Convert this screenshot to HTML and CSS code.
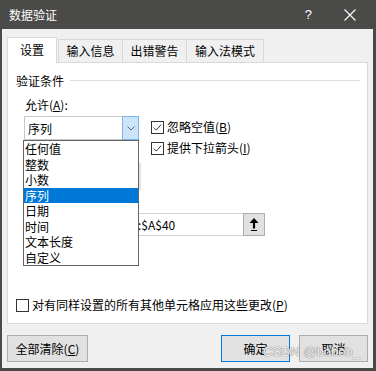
FILE: index.html
```html
<!DOCTYPE html>
<html>
<head>
  <title>数据验证</title>
  <link rel="stylesheet" href="styles.css">
</head>
<body>
  <div class="window">
    <div class="titlebar">
      <span class="title">数据验证</span>
      <span class="help">?</span>
      <svg class="close" width="12" height="12" viewBox="0 0 12 12">
        <path d="M0.5 0.5 L11.5 11.5 M11.5 0.5 L0.5 11.5" stroke="#fff" stroke-width="1.1" fill="none"/>
      </svg>
    </div>

    <div class="client">
      <div class="tabs">
        <div class="tab active">设置</div>
        <div class="tab tab-info">输入信息</div>
        <div class="tab tab-error">出错警告</div>
        <div class="tab tab-ime">输入法模式</div>
      </div>

      <div class="panel">
        <div class="legend"><span>验证条件</span><span class="rule"></span></div>

        <div class="cond">
          <div class="label">允许(<u>A</u>):</div>
          <div class="allow-row">
            <div class="combo">
              <span class="combo-text">序列</span>
              <span class="combo-btn">
                <svg width="8" height="5" viewBox="0 0 8 5"><path d="M0.5 0.5 L4 4 L7.5 0.5" stroke="#666" fill="none"/></svg>
              </span>
            </div>
            <div class="checks">
              <div class="check">
                <svg width="13" height="13" viewBox="0 0 13 13"><rect x="0.5" y="0.5" width="12" height="12" fill="#fff" stroke="#333"/><path d="M2.8 6.6 L5.3 9.1 L10.2 3.6" stroke="#333" fill="none"/></svg>
                <span>忽略空值(<u>B</u>)</span>
              </div>
              <div class="check">
                <svg width="13" height="13" viewBox="0 0 13 13"><rect x="0.5" y="0.5" width="12" height="12" fill="#fff" stroke="#333"/><path d="M2.8 6.6 L5.3 9.1 L10.2 3.6" stroke="#333" fill="none"/></svg>
                <span>提供下拉箭头(<u>I</u>)</span>
              </div>
            </div>
          </div>
          <div class="data-box"></div>
          <!-- source label sits under the open drop list -->
          <div class="src-label"></div>
          <div class="src-row">
            <div class="src-input">=$A$1:$A$40</div>
            <div class="src-btn">
              <svg width="12" height="15" viewBox="0 0 12 15"><path d="M6 1 L1.5 6 L4.9 6 L4.9 11.5 L7.1 11.5 L7.1 6 L10.5 6 Z" fill="#000"/><rect x="3" y="13" width="6" height="1" fill="#000"/></svg>
            </div>
          </div>
        </div>

        <div class="check apply">
          <svg width="13" height="13" viewBox="0 0 13 13"><rect x="0.5" y="0.5" width="12" height="12" fill="#fff" stroke="#333"/></svg>
          <span>对有同样设置的所有其他单元格应用这些更改(<u>P</u>)</span>
        </div>

        <ul class="droplist">
          <li>任何值</li>
          <li>整数</li>
          <li>小数</li>
          <li class="sel">序列</li>
          <li>日期</li>
          <li>时间</li>
          <li>文本长度</li>
          <li>自定义</li>
        </ul>
      </div>

      <div class="buttons">
        <button class="btn-clear">全部清除(<u>C</u>)</button>
        <button class="btn-ok">确定</button>
        <button class="btn-cancel">取消</button>
      </div>
    </div>

    <div class="watermark">CSDN @bobob_</div>
  </div>
</body>
</html>
```

FILE: styles.css
```css
html, body {
  margin: 0;
  padding: 0;
  font-family: "Noto Sans CJK SC", "Noto Sans", sans-serif;
  font-size: 12px;
  color: #000;
}
.window {
  position: relative;
  height: 371px;
  display: flex;
  flex-direction: column;
  background-color: #4a4a48;
}
.titlebar {
  height: 29px;
  flex-shrink: 0;
  display: flex;
  align-items: center;
  padding-left: 9px;
  color: #fff;
}
.title {
  font-size: 12px;
  line-height: 16px;
}
.help {
  margin-left: auto;
  font-family: "Liberation Sans", sans-serif;
  font-size: 13px;
}
.close {
  margin-left: 32px;
  margin-right: 20px;
}
.client {
  flex: 1;
  margin: 0 3px 3px 2px;
  padding: 8px 5px 0 5px;
  background-color: #f0f0f0;
  display: flex;
  flex-direction: column;
}
.tabs {
  display: flex;
  height: 25px;
  position: relative;
  z-index: 1;
}
.tab {
  box-sizing: border-box;
  margin-top: 2px;
  height: 23px;
  line-height: 21px;
  border: 1px solid #d9d9d9;
  border-bottom: none;
  background-color: #f0f0f0;
  text-align: center;
}
.tab.active {
  margin-top: 0;
  height: 26px;
  line-height: 24px;
  width: 50px;
  background-color: #fff;
}
.tab-info {
  width: 65px;
  margin-left: 1px;
}
.tab-error {
  width: 64px;
  border-left: none;
}
.tab-ime {
  width: 77px;
  border-left: none;
}
.panel {
  box-sizing: border-box;
  position: relative;
  height: 262px;
  background-color: #fff;
  border: 1px solid #d9d9d9;
  display: flex;
  flex-direction: column;
}
.legend {
  display: flex;
  align-items: center;
  height: 16px;
  line-height: 16px;
  margin: 10px 7px 0 8px;
}
.legend .rule {
  flex: 1;
  margin-left: 6px;
  margin-top: -1px;
  border-top: 1px solid #dcdcdc;
}
.cond {
  padding-left: 16px;
}
.label {
  line-height: 16px;
  margin: 8px 0 0 1px;
}
.allow-row {
  display: flex;
  margin-top: 3px;
}
.combo {
  box-sizing: border-box;
  width: 115px;
  height: 24px;
  border: 1px solid #c8c8c8;
  display: flex;
  align-items: center;
}
.combo-text {
  padding-left: 3px;
}
.combo-btn {
  box-sizing: border-box;
  margin: -1px -1px -1px auto;
  width: 17px;
  height: 24px;
  background-color: #cce4f7;
  border: 1px solid #7eb4ea;
  display: flex;
  align-items: center;
  justify-content: center;
}
.checks {
  margin-left: 12px;
  padding-top: 3px;
  display: flex;
  flex-direction: column;
  gap: 5px;
}
.check {
  display: flex;
  align-items: center;
  gap: 3px;
  height: 16px;
  line-height: 16px;
  white-space: nowrap;
}
.data-box {
  margin-top: 7px;
  width: 117px;
  height: 27px;
  background-color: #e3e3e3;
}
.src-label {
  margin-top: 5px;
  height: 16px;
}
.src-row {
  display: flex;
  margin-top: 2px;
  height: 23px;
}
.src-input {
  box-sizing: border-box;
  width: 219px;
  height: 23px;
  line-height: 21px;
  border: 1px solid #d4d4d4;
  border-right: none;
  padding-left: 79px;
}
.src-btn {
  box-sizing: border-box;
  width: 22px;
  height: 23px;
  background-color: #e1e1e1;
  border: 1px solid #adadad;
  display: flex;
  align-items: center;
  justify-content: center;
}
.apply {
  margin: auto 0 10px 8px;
}
.droplist {
  position: absolute;
  left: 15px;
  top: 77px;
  z-index: 2;
  box-sizing: border-box;
  width: 116px;
  height: 126px;
  margin: 0;
  padding: 0;
  list-style: none;
  background-color: #fff;
  border: 1px solid #646464;
}
.droplist li {
  height: 15.5px;
  line-height: 15.5px;
  padding-left: 1px;
}
.droplist li.sel {
  background-color: #0078d7;
  color: #fff;
}
.buttons {
  display: flex;
  margin-top: 11px;
}
.buttons button {
  box-sizing: border-box;
  height: 27px;
  padding: 0;
  font-family: inherit;
  font-size: 12px;
  color: #000;
  background-color: #e1e1e1;
  border: 1px solid #adadad;
}
.btn-clear {
  width: 81px;
}
.btn-ok {
  width: 69px;
  margin-left: auto;
  border-color: #0078d7 !important;
}
.btn-cancel {
  width: 69px;
  margin-left: 9px;
}
.watermark {
  position: absolute;
  left: 263px;
  top: 344px;
  font-family: "Liberation Sans", sans-serif;
  font-size: 13px;
  line-height: 16px;
  color: rgba(255, 255, 255, 0.92);
  text-shadow: 0 0 1px #777, 0 0 1px #777;
}
```
